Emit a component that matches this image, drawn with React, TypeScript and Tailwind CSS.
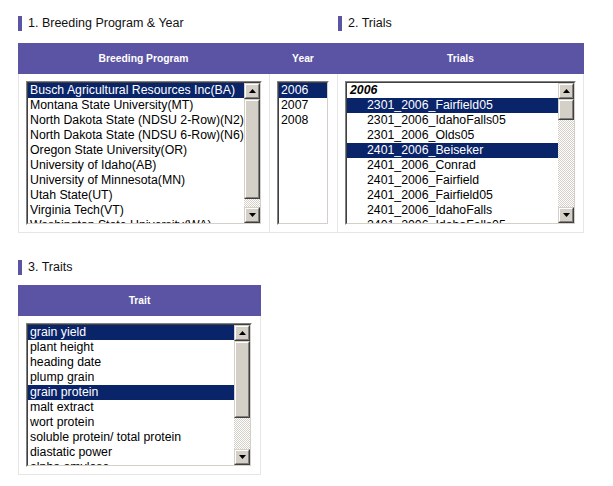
import React from "react";

type Item = { label: string; selected?: boolean; group?: boolean; indent?: boolean };

const breeding: Item[] = [
  { label: "Busch Agricultural Resources Inc(BA)", selected: true },
  { label: "Montana State University(MT)" },
  { label: "North Dakota State (NDSU 2-Row)(N2)" },
  { label: "North Dakota State (NDSU 6-Row)(N6)" },
  { label: "Oregon State University(OR)" },
  { label: "University of Idaho(AB)" },
  { label: "University of Minnesota(MN)" },
  { label: "Utah State(UT)" },
  { label: "Virginia Tech(VT)" },
  { label: "Washington State University(WA)" },
];

const years: Item[] = [{ label: "2006", selected: true }, { label: "2007" }, { label: "2008" }];

const trials: Item[] = [
  { label: "2006", group: true },
  { label: "2301_2006_Fairfield05", indent: true, selected: true },
  { label: "2301_2006_IdahoFalls05", indent: true },
  { label: "2301_2006_Olds05", indent: true },
  { label: "2401_2006_Beiseker", indent: true, selected: true },
  { label: "2401_2006_Conrad", indent: true },
  { label: "2401_2006_Fairfield", indent: true },
  { label: "2401_2006_Fairfield05", indent: true },
  { label: "2401_2006_IdahoFalls", indent: true },
  { label: "2401_2006_IdahoFalls05", indent: true },
];

const traits: Item[] = [
  { label: "grain yield", selected: true },
  { label: "plant height" },
  { label: "heading date" },
  { label: "plump grain" },
  { label: "grain protein", selected: true },
  { label: "malt extract" },
  { label: "wort protein" },
  { label: "soluble protein/ total protein" },
  { label: "diastatic power" },
  { label: "alpha amylase" },
];

function Raised({ className = "", children }: { className?: string; children?: React.ReactNode }) {
  return (
    <div className={`border border-t-[#d4d0c8] border-l-[#d4d0c8] border-r-[#404040] border-b-[#404040] ${className}`}>
      <div className="flex h-full w-full items-center justify-center border border-t-white border-l-white border-r-[#808080] border-b-[#808080] bg-[#d4d0c8]">
        {children}
      </div>
    </div>
  );
}

function Arrow({ down }: { down?: boolean }) {
  return (
    <svg width="7" height="4" viewBox="0 0 7 4">
      <polygon points={down ? "0,0 7,0 3.5,4" : "3.5,0 7,4 0,4"} fill="#000" />
    </svg>
  );
}

function Scrollbar({ thumb }: { thumb: number }) {
  return (
    <div className="flex h-full w-[16px] shrink-0 flex-col">
      <Raised className="h-[16px] w-[16px]">
        <Arrow />
      </Raised>
      <div className="flex flex-1 flex-col bg-[repeating-conic-gradient(#d4d0c8_0_25%,#ffffff_0_50%)] bg-[length:2px_2px]">
        <Raised className="w-[16px]">
          <div style={{ height: thumb - 4 }} />
        </Raised>
      </div>
      <Raised className="h-[16px] w-[16px]">
        <Arrow down />
      </Raised>
    </div>
  );
}

function ListBox({ items, width, thumb }: { items: Item[]; width: string; thumb?: number }) {
  return (
    <div className={`${width} h-[144px] border border-t-[#808080] border-l-[#808080] border-r-white border-b-white`}>
      <div className="flex h-full border border-t-[#404040] border-l-[#404040] border-r-[#d4d0c8] border-b-[#d4d0c8] bg-white">
        <div className="min-w-0 flex-1 overflow-hidden">
          {items.map((it) => (
            <div
              key={it.label}
              className={`h-[15px] whitespace-nowrap text-[12.3px] leading-[15px] ${
                it.selected ? "bg-[#0a246a] text-white" : "text-black"
              } ${it.group ? "pl-[3px] font-bold italic" : it.indent ? "pl-[20px]" : "pl-[2px]"}`}
            >
              {it.label}
            </div>
          ))}
        </div>
        {thumb !== undefined && <Scrollbar thumb={thumb} />}
      </div>
    </div>
  );
}

function Heading({ children, className = "" }: { children: React.ReactNode; className?: string }) {
  return (
    <div className={`flex h-[15px] items-center ${className}`}>
      <div className="h-[15px] w-[4px] bg-[#5b53a4]" />
      <span className="ml-[6px] text-[12.5px] text-[#111]">{children}</span>
    </div>
  );
}

export default function App() {
  return (
    <div className="min-h-[486px] w-[613px] bg-white pl-[18px] pt-[16px] font-['Liberation_Sans',Arial,sans-serif]">
      <div className="flex">
        <Heading className="w-[320px]">1. Breeding Program &amp; Year</Heading>
        <Heading>2. Trials</Heading>
      </div>

      <div className="mt-[12px] w-[566px]">
        <div className="flex h-[31px] items-center bg-[#5b53a4] text-[10.3px] font-bold text-white">
          <div className="w-[251px] text-center">Breeding Program</div>
          <div className="w-[68px] text-center">Year</div>
          <div className="flex-1 text-center">Trials</div>
        </div>
        <div className="flex border border-t-0 border-[#e6e6e6]">
          <div className="w-[251px] border-r border-[#e6e6e6] px-[7px] py-[7px]">
            <ListBox items={breeding} width="w-[236px]" thumb={100} />
          </div>
          <div className="w-[68px] border-r border-[#e6e6e6] pl-[7px] py-[7px]">
            <ListBox items={years} width="w-[52px]" />
          </div>
          <div className="flex-1 px-[7px] py-[7px]">
            <ListBox items={trials} width="w-[231px]" thumb={21} />
          </div>
        </div>
      </div>

      <Heading className="mt-[27px]">3. Traits</Heading>
      <div className="mt-[10px] w-[243px]">
        <div className="flex h-[31px] items-center justify-center bg-[#5b53a4] text-[10.3px] font-bold text-white">
          Trait
        </div>
        <div className="border border-t-0 border-[#e6e6e6] pl-[7px] pr-[8px] py-[7px]">
          <ListBox items={traits} width="w-[226px]" thumb={77} />
        </div>
      </div>
    </div>
  );
}
